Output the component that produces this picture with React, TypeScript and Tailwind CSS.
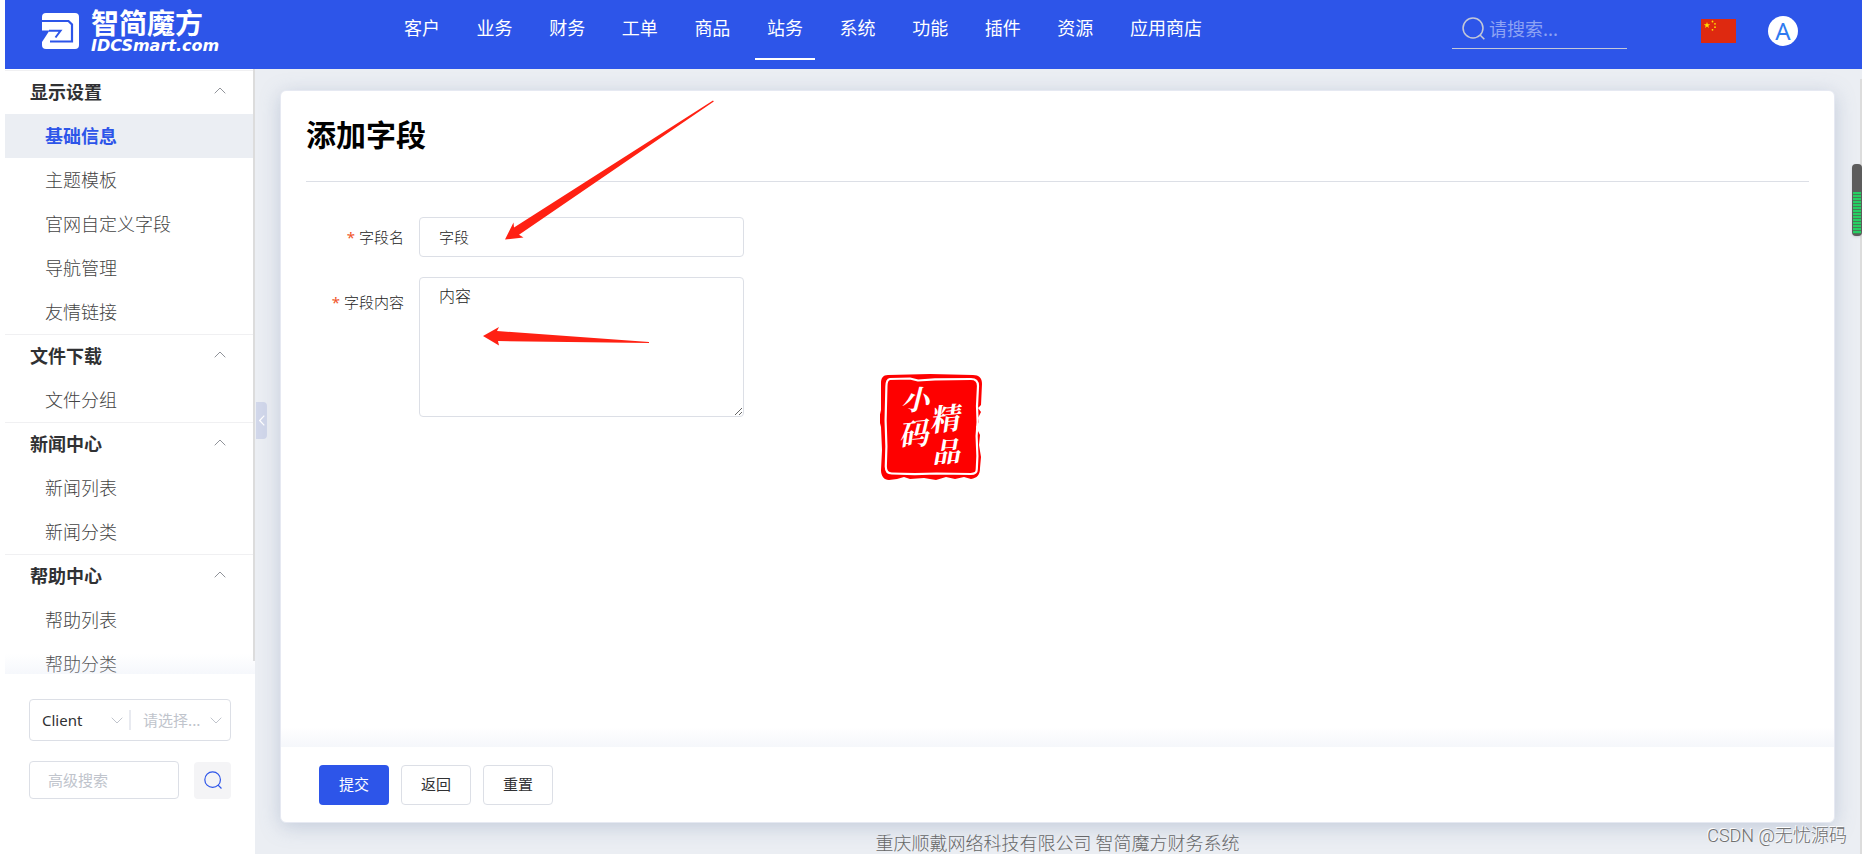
import React, { useState } from 'react'
import { clsx } from 'clsx'

const NAV_ITEMS = ['客户', '业务', '财务', '工单', '商品', '站务', '系统', '功能', '插件', '资源', '应用商店']

const MENU = [
  { title: '显示设置', items: ['基础信息', '主题模板', '官网自定义字段', '导航管理', '友情链接'] },
  { title: '文件下载', items: ['文件分组'] },
  { title: '新闻中心', items: ['新闻列表', '新闻分类'] },
  { title: '帮助中心', items: ['帮助列表', '帮助分类'] },
]

const Chevron: React.FC<{ className?: string }> = ({ className }) => (
  <svg viewBox="0 0 12 7" fill="none" stroke="currentColor" className={className}>
    <path d="M.7.7 6 6 11.3.7" />
  </svg>
)

const SearchIcon: React.FC<{ className?: string; strokeWidth?: number }> = ({ className, strokeWidth = 1.2 }) => (
  <svg viewBox="0 0 24 24" fill="none" stroke="currentColor" strokeWidth={strokeWidth} className={className}>
    <circle cx="11.5" cy="11.5" r="10.4" />
    <path d="M18.8 18.8 23.3 23.3" />
  </svg>
)

const Logo: React.FC = () => (
  <a href="#" className="flex items-start gap-3 text-white">
    <svg viewBox="0 0 37 36" fill="none" className="mt-[13px] h-9 w-[37px]">
      <rect width="37" height="36" rx="4" fill="#fff" />
      <path d="M0 8H26.500L30 11.500V28.500H8" stroke="#2d55e9" strokeWidth="2.200" />
      <path d="M0 17.500H7.500L0 29Z" fill="#2d55e9" />
      <path d="M7 17.800H18.500L13.500 24.500" stroke="#2d55e9" strokeWidth="2" />
    </svg>
    <span className="flex flex-col pt-1.5">
      <span className="text-[28px] leading-8 font-bold">智简魔方</span>
      <span className="font-['DejaVu_Sans',sans-serif] text-base leading-4 font-bold italic">IDCSmart.com</span>
    </span>
  </a>
)

const Flag: React.FC = () => (
  <svg viewBox="0 0 35 24" className="h-6 w-[35px]">
    <path fill="#de2910" d="M0 0h35v24H0z" />
    <g fill="#ffde00">
      <path d="m6 3 .8 2.3h2.4L7.3 6.7 8 9 6 7.600 4 9l.7-2.300-1.900-1.400h2.400z" />
      <circle cx="11.500" cy="2.500" r=".9" />
      <circle cx="14" cy="4.800" r=".9" />
      <circle cx="14" cy="8.200" r=".9" />
      <circle cx="11.500" cy="10.800" r=".9" />
    </g>
  </svg>
)

const Header: React.FC = () => (
  <header className="flex h-[69px] shrink-0 items-start bg-[#2d55e9] pr-16 pl-[37px]">
    <div className="w-[350px]">
      <Logo />
    </div>
    <nav className="flex h-[60px] w-[822px] justify-between text-lg text-white">
      {NAV_ITEMS.map((item) => (
        <a
          key={item}
          href="#"
          className={clsx('flex items-center px-3 pb-1 border-b-2', item === '站务' ? 'border-white' : 'border-transparent')}
        >
          {item}
        </a>
      ))}
    </nav>
    <div className="mt-[13px] ml-auto flex items-center">
      <label className="flex h-9 w-[175px] items-center gap-1 border-b border-[#c3c8d8] pb-1 pl-2.5 text-[#c3c8d8]">
        <SearchIcon className="size-[23px]" strokeWidth={1.6} />
        <input
          type="text"
          aria-label="请搜索"
          placeholder="请搜索..."
          className="w-32 pb-0.5 text-lg text-white outline-none placeholder:text-[#8ea3f3]"
        />
      </label>
      <button aria-label="中文" className="ml-[74px]">
        <Flag />
      </button>
      <button className="ml-8 flex size-[30px] items-center justify-center rounded-full bg-white font-['Noto_Sans',sans-serif] text-2xl text-[#2f7bf0]">
        A
      </button>
    </div>
  </header>
)

const Sidebar: React.FC = () => {
  const [active, setActive] = useState('基础信息')

  return (
    <aside className="flex w-[250px] shrink-0 flex-col bg-white">
      <div className="relative min-h-0 flex-1 overflow-hidden pt-px">
        {MENU.map((group) => (
          <section key={group.title} className="mr-0.5">
            <h2 className="flex h-11 items-center justify-between border-t border-[#f0f0f2] pr-[27px] pb-1 pl-[25px] text-lg font-bold text-[#303133]">
              {group.title}
              <Chevron className="w-3 rotate-180 text-[#909399]" />
            </h2>
            {group.items.map((item) => (
              <button
                key={item}
                onClick={() => setActive(item)}
                className={clsx(
                  'flex h-11 w-full items-center pb-[3px] pl-10 text-lg',
                  item === active ? 'bg-[#ebeef3] font-bold text-[#2d55e9]' : 'font-light text-[#444]'
                )}
              >
                {item}
              </button>
            ))}
          </section>
        ))}
        {/* scroll thumb */}
        <div className="absolute top-0 right-0 bottom-[13px] w-0.5 bg-[#dcdcdc]" />
        <div className="pointer-events-none absolute inset-x-0 bottom-0 h-5 bg-linear-to-b from-transparent to-[#dfe6f4]/30" />
      </div>

      <div className="flex h-[180px] flex-col gap-5 px-6 pt-[25px]">
        <div className="flex h-[42px] items-center rounded border border-[#dcdfe6] text-[15px]">
          <label className="relative flex h-5 w-[101px] items-center border-r-2 border-[#e8eaf0]">
            <select aria-label="类型" className="w-full appearance-none pl-3 font-['Noto_Sans',sans-serif] text-[#303133] outline-none">
              <option>Client</option>
            </select>
            <Chevron className="pointer-events-none absolute right-1.5 w-3 text-[#c0c4cc]" />
          </label>
          <label className="relative flex h-5 flex-1 items-center">
            <select aria-label="条件" className="w-full appearance-none pl-3 text-[#c0c4cc] outline-none">
              <option>请选择...</option>
            </select>
            <Chevron className="pointer-events-none absolute right-2 w-3 text-[#c0c4cc]" />
          </label>
        </div>
        <div className="flex items-center justify-between">
          <input
            type="text"
            aria-label="高级搜索"
            placeholder="高级搜索"
            className="h-[38px] w-[150px] rounded border border-[#dcdfe6] px-[18px] pb-0.5 text-[15px] outline-none placeholder:text-[#c0c4cc]"
          />
          <button aria-label="搜索" className="flex size-[37px] items-center justify-center rounded bg-[#f4f4f6] text-[#2d55e9]">
            <SearchIcon className="size-[18px]" strokeWidth={1.6} />
          </button>
        </div>
      </div>
    </aside>
  )
}

const Stamp: React.FC = () => (
  <svg viewBox="0 0 104 107" className="absolute top-[283px] left-[599px] w-[104px]">
    <path
      fill="#fe0000"
      d="M8 1 50 0l43 1c6 0 9 3 9 9l-1 21-3 3 3 4-3 6 1 4-3 5 4 8-1 10 2 12-1 11c0 7-3 10-9 11l-7-2-9 2-9-2-10 3-12-2-14 1-6-2-7 2-8 1c-5 0-8-4-8-10l1-20-1-23-2-8 2-9L1 9c0-5 2-8 7-8Z"
    />
    <path
      fill="none"
      stroke="#fff"
      strokeWidth="2.200"
      strokeLinejoin="round"
      d="m10 5 20-.5 8 2 17-1.200 36-.3c5 0 7 2 7 7l-1 20 .6 16-1 14 .8 20-.6 13c0 4-2 5-6 5l-34-.5-22 .7-23-.7c-5 0-6-3-6-7l.6-20-.8-26 .8-34c0-5 1-7 3.600-7.500Z"
    />
    <g
      fill="#fff"
      fontFamily="'Noto Serif CJK SC','Noto Sans CJK SC',sans-serif"
      fontWeight="700"
      fontStyle="italic"
    >
      <text x="21" y="36" fontSize="28">小</text>
      <text x="18" y="71" fontSize="30" transform="rotate(-6 34 60)">码</text>
      <text x="49" y="56" fontSize="30" transform="rotate(-6 65 46)">精</text>
      <text x="52" y="88" fontSize="28" transform="rotate(-4 66 80)">品</text>
    </g>
  </svg>
)

// hand-drawn pointers to the two required fields
const Pointers: React.FC = () => (
  <svg viewBox="0 0 440 260" fill="#ff2113" className="pointer-events-none absolute top-[9px] left-[139px] w-[440px]">
    <path d="M85 139.500 93.500 122.500 94 127.500 293 0.500 293.800 1.500 99 134.800 103.500 137.500Z" />
    <path d="M63 236 79 227 77 231 229 242 229 243 78 241 79 245.500Z" />
  </svg>
)

const FieldForm: React.FC = () => {
  const [name, setName] = useState('字段')
  const [content, setContent] = useState('内容')

  return (
    <form
      onSubmit={(e) => e.preventDefault()}
      className="relative flex flex-1 flex-col rounded-md border border-[#e6e9f2] bg-white shadow-[0_4px_20px_rgba(120,140,175,0.35)]"
    >
      <div className="flex-1 px-[25px]">
        <h1 className="flex h-[91px] items-center border-b border-[#dcdfe6] pb-1.5 text-3xl font-bold text-black">添加字段</h1>
        <div className="mt-[35px] flex items-center text-[15px]">
          <label htmlFor="field-name" className="w-[98px] text-right font-light text-[#222]">
            <span className="mr-1 font-['Noto_Sans',sans-serif] font-normal text-[#f0562a]">*</span>
            字段名
          </label>
          <input
            id="field-name"
            value={name}
            onChange={(e) => setName(e.target.value)}
            className="ml-[15px] h-10 w-[325px] rounded border border-[#dcdfe6] px-[19px] pb-0.5 font-light text-[#222] outline-none"
          />
        </div>
        <div className="mt-5 flex items-start">
          <label htmlFor="field-content" className="mt-[13px] w-[98px] text-right text-[15px] leading-6 font-light text-[#222]">
            <span className="mr-1 font-['Noto_Sans',sans-serif] font-normal text-[#f0562a]">*</span>
            字段内容
          </label>
          <textarea
            id="field-content"
            value={content}
            onChange={(e) => setContent(e.target.value)}
            className="ml-[15px] h-[140px] w-[325px] resize rounded border border-[#dcdfe6] px-[19px] py-[5px] text-base font-light text-[#222] outline-none"
          />
        </div>
      </div>

      <div className="h-5 bg-linear-to-b from-white to-[#f5f7fb]" />
      <div className="flex h-[75px] items-center gap-3 px-[38px] text-[15px]">
        <button type="submit" className="h-10 w-[70px] rounded bg-[#2d55e9] text-white">
          提交
        </button>
        <button type="button" className="h-10 w-[70px] rounded border border-[#dcdfe6] text-[#303133]">
          返回
        </button>
        <button type="reset" className="h-10 w-[70px] rounded border border-[#dcdfe6] text-[#303133]">
          重置
        </button>
      </div>

      <Pointers />
      <Stamp />
    </form>
  )
}

export default function App() {
  return (
    <div className="relative flex h-screen flex-col overflow-hidden bg-white pl-[5px] font-['Noto_Sans_CJK_SC',sans-serif]">
      <Header />
      <div className="flex min-h-0 flex-1">
        <Sidebar />
        <main className="relative flex flex-1 flex-col bg-[#ebeef3] pt-[21px] pr-[27px] pl-[25px]">
          <button
            aria-label="收起菜单"
            className="absolute top-[333px] left-px flex h-[37px] w-[11px] items-center justify-center rounded-r bg-[#d1d7ea] text-white"
          >
            <svg viewBox="0 0 6 11" fill="none" stroke="currentColor" strokeWidth="1.2" className="w-1.5">
              <path d="M5.300.7.700 5.500 5.300 10.300" />
            </svg>
          </button>
          <FieldForm />
          <footer className="pt-[7px] text-center text-lg leading-6 font-light text-[#666]">
            重庆顺戴网络科技有限公司 智简魔方财务系统
          </footer>
          {/* page scroll thumb */}
          <div className="absolute top-2.5 right-0 bottom-0 w-0.5 bg-[#dcdcdc]" />
        </main>
      </div>

      {/* charge gauge docked on the window edge */}
      <div className="absolute top-[164px] right-0 flex h-[72px] w-2.5 flex-col justify-end rounded bg-[#5c5c5c] px-px pb-0.5 shadow">
        <div className="h-[42px] bg-[repeating-linear-gradient(to_bottom,#25cf63_0_2px,#4a7a55_2px_3px)]" />
      </div>
      <div className="absolute right-[15px] bottom-1.5 font-[Roboto,'Noto_Sans_CJK_SC',sans-serif] text-lg leading-6 font-light text-[#707070] [text-shadow:-1px_-1px_0_#fff]">
        CSDN @无忧源码
      </div>
    </div>
  )
}
